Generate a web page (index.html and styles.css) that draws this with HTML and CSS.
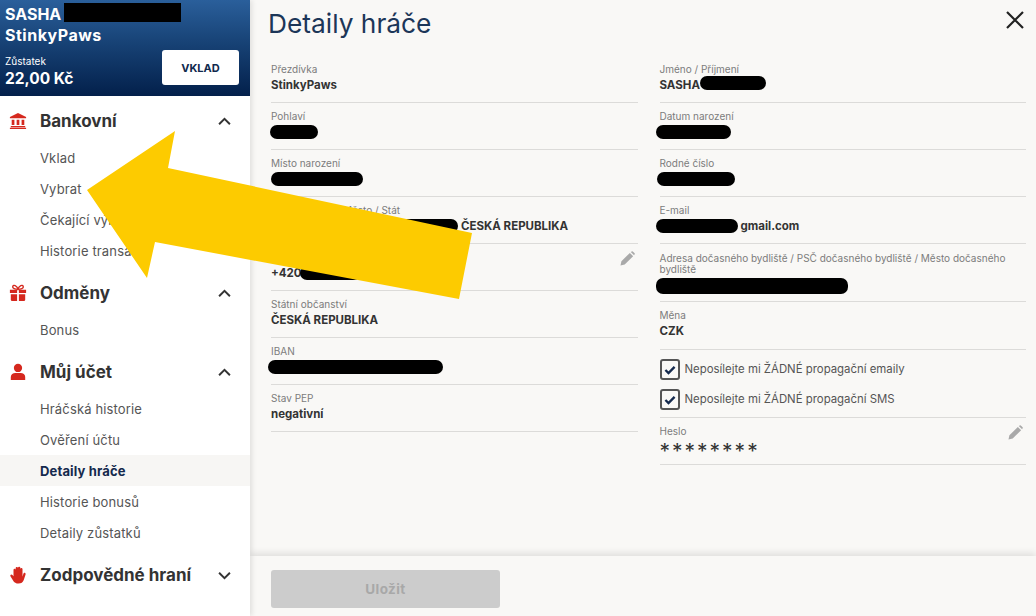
FILE: index.html
```html
<!DOCTYPE html>
<html lang="cs">
  <head>
    <meta charset="utf-8">
    <title>Detaily hráče</title>
    <link rel="stylesheet" href="styles.css">
  </head>
  <body>
    <aside class="sidebar">
      <div class="account">
        <div class="accountName">SASHA <span class="accountBlot"></span></div>
        <div class="accountNick">StinkyPaws</div>
        <div class="balanceRow">
          <div>
            <div class="balanceLabel">Zůstatek</div>
            <div class="balanceValue">22,00 Kč</div>
          </div>
          <button class="depositButton">VKLAD</button>
        </div>
      </div>
      <nav class="menu">
        <div class="menuHead">
          <svg class="menuIcon" viewBox="0 0 20 20"><path d="M10 1 L19 5.5 V7 H1 V5.5 Z M3 8.5 H6 V14.5 H3 Z M8.5 8.5 H11.5 V14.5 H8.5 Z M14 8.5 H17 V14.5 H14 Z M2 15.5 H18 V17 H2 Z M1 17.5 H19 V19 H1 Z"/></svg>
          <span class="menuTitle">Bankovní</span>
          <svg class="chevron" viewBox="0 0 12 8"><path d="M1 6.5 L6 1.5 L11 6.5"/></svg>
        </div>
        <ul class="subMenu">
          <li>Vklad</li>
          <li>Vybrat</li>
          <li>Čekající výběry</li>
          <li>Historie transakcí</li>
        </ul>
        <div class="menuHead">
          <svg class="menuIcon" viewBox="0 0 20 20"><path d="M1 6.5 H9 V10 H1 Z M11 6.5 H19 V10 H11 Z M2 11.5 H9 V19 H3.5 Q2 19 2 17.5 Z M11 11.5 H18 V17.5 Q18 19 16.5 19 H11 Z"/><path d="M10 6 C7 6 3.5 5 4.2 2.5 C5 0.5 8.5 1.5 10 5.5 C11.5 1.5 15 0.5 15.8 2.5 C16.5 5 13 6 10 6 Z" fill="none" stroke="#d5281e" stroke-width="1.6"/></svg>
          <span class="menuTitle">Odměny</span>
          <svg class="chevron" viewBox="0 0 12 8"><path d="M1 6.5 L6 1.5 L11 6.5"/></svg>
        </div>
        <ul class="subMenu">
          <li>Bonus</li>
        </ul>
        <div class="menuHead">
          <svg class="menuIcon" viewBox="0 0 20 20"><circle cx="10" cy="5.5" r="4.6"/><path d="M2 19 V15.5 C2 12.5 4.5 11 7 11 H13 C15.5 11 18 12.5 18 15.5 V19 Z"/></svg>
          <span class="menuTitle">Můj účet</span>
          <svg class="chevron" viewBox="0 0 12 8"><path d="M1 6.5 L6 1.5 L11 6.5"/></svg>
        </div>
        <ul class="subMenu">
          <li>Hráčská historie</li>
          <li>Ověření účtu</li>
          <li class="active">Detaily hráče</li>
          <li>Historie bonusů</li>
          <li>Detaily zůstatků</li>
        </ul>
        <div class="menuHead">
          <svg class="menuIcon" viewBox="0 0 20 20"><path d="M5 10 V4.5 Q5 3 6.2 3 Q7.4 3 7.4 4.5 V2.5 Q7.4 1 8.7 1 Q10 1 10 2.5 V2.2 Q10 .8 11.3 .8 Q12.6 .8 12.6 2.2 V3.5 Q12.6 2.2 13.8 2.2 Q15 2.2 15 3.5 V12 L16 8.5 Q16.6 7.2 17.7 7.6 Q18.8 8.2 18.4 9.5 L16.4 15.5 Q15 19.5 10.5 19.5 Q6.5 19.5 4.5 16 L1.6 11.5 Q1 10.2 2 9.6 Q3 9 3.8 10 L5 11.5 Z"/></svg>
          <span class="menuTitle">Zodpovědné hraní</span>
          <svg class="chevron" viewBox="0 0 12 8"><path d="M1 1.5 L6 6.5 L11 1.5"/></svg>
        </div>
      </nav>
    </aside>

    <main class="content">
      <header class="titleBar">
        <h1 class="title">Detaily hráče</h1>
        <svg class="closeIcon" viewBox="0 0 20 20"><path d="M2 2 L18 18 M18 2 L2 18"/></svg>
      </header>

      <div class="details">
        <div class="column">
          <div class="field">
            <div class="label">Přezdívka</div>
            <div class="value">StinkyPaws</div>
          </div>
          <div class="field">
            <div class="label">Pohlaví</div>
            <div class="value"><span class="blot blotGender"></span></div>
          </div>
          <div class="field">
            <div class="label">Místo narození</div>
            <div class="value"><span class="blot blotBirthPlace"></span></div>
          </div>
          <div class="field">
            <div class="label">Adresa / PSČ / Město / Stát</div>
            <div class="value"><span class="blot blotAddress"></span>ČESKÁ REPUBLIKA</div>
          </div>
          <div class="field">
            <div class="label">Telefonní číslo</div>
            <div class="value">+420<span class="blot blotPhone"></span></div>
            <svg class="pencil" viewBox="0 0 16 16"><path d="M0.5 15.5 L1.5 11 L10.5 2 L14 5.5 L5 14.5 Z M11.5 1 L12.5 0.4 Q13 0 13.6 0.4 L15.6 2.4 Q16 3 15.6 3.5 L15 4.5 Z"/></svg>
          </div>
          <div class="field">
            <div class="label">Státní občanství</div>
            <div class="value">ČESKÁ REPUBLIKA</div>
          </div>
          <div class="field">
            <div class="label">IBAN</div>
            <div class="value"><span class="blot blotIban"></span></div>
          </div>
          <div class="field">
            <div class="label">Stav PEP</div>
            <div class="value">negativní</div>
          </div>
        </div>

        <div class="column">
          <div class="field">
            <div class="label">Jméno / Příjmení</div>
            <div class="value">SASHA<span class="blot blotName"></span></div>
          </div>
          <div class="field">
            <div class="label">Datum narození</div>
            <div class="value"><span class="blot blotBirthDate"></span></div>
          </div>
          <div class="field">
            <div class="label">Rodné číslo</div>
            <div class="value"><span class="blot blotBirthNumber"></span></div>
          </div>
          <div class="field">
            <div class="label">E-mail</div>
            <div class="value"><span class="blot blotEmail"></span>gmail.com</div>
          </div>
          <div class="field fieldTall">
            <div class="label">Adresa dočasného bydliště / PSČ dočasného bydliště / Město dočasného bydliště</div>
            <div class="value"><span class="blot blotTempAddress"></span></div>
          </div>
          <div class="field fieldCurrency">
            <div class="label">Měna</div>
            <div class="value">CZK</div>
          </div>
          <div class="checks">
            <label class="check">
              <span class="checkBox"><svg viewBox="0 0 14 12"><path d="M1.5 6 L5.2 9.7 L12.5 2.2"/></svg></span>
              <span class="checkText">Neposílejte mi ŽÁDNÉ propagační emaily</span>
            </label>
            <label class="check">
              <span class="checkBox"><svg viewBox="0 0 14 12"><path d="M1.5 6 L5.2 9.7 L12.5 2.2"/></svg></span>
              <span class="checkText">Neposílejte mi ŽÁDNÉ propagační SMS</span>
            </label>
          </div>
          <div class="field">
            <div class="label">Heslo</div>
            <div class="value stars">********</div>
            <svg class="pencil" viewBox="0 0 16 16"><path d="M0.5 15.5 L1.5 11 L10.5 2 L14 5.5 L5 14.5 Z M11.5 1 L12.5 0.4 Q13 0 13.6 0.4 L15.6 2.4 Q16 3 15.6 3.5 L15 4.5 Z"/></svg>
          </div>
        </div>
      </div>

      <footer class="saveBar">
        <button class="saveButton" disabled>Uložit</button>
      </footer>
    </main>

    <!-- yellow arrow painted over the screenshot -->
    <svg class="arrow" viewBox="0 0 1036 616">
      <polygon points="87,190 175,131 168,168 472,233 459,299 155,242 147,278"/>
    </svg>
  </body>
</html>
```

FILE: styles.css
```css
* {
  box-sizing: border-box;
}

html, body {
  margin: 0;
  height: 100%;
}

body {
  display: flex;
  width: 1036px;
  height: 616px;
  overflow: hidden;
  position: relative;
  background-color: #f9f8f6;
  font-family: Inter, "Open Sans", sans-serif;
  color: #333333;
}

/* sidebar */

.sidebar {
  width: 250px;
  flex-shrink: 0;
  background-color: #ffffff;
  box-shadow: 2px 0 5px rgba(0, 0, 0, 0.1);
  z-index: 1;
}

.account {
  height: 96px;
  padding: 5px 11px 0 5px;
  color: #ffffff;
  background: linear-gradient(180deg, #2a5f9b 0%, #194579 40%, #03204b 100%);
}

.accountName,
.accountNick {
  font-size: 16px;
  font-weight: 700;
  line-height: 19px;
  display: flex;
  gap: 3px;
}

.accountNick {
  margin-top: 2px;
  letter-spacing: 0.5px;
}

.accountBlot {
  width: 117px;
  height: 19px;
  margin-top: -2px;
  background-color: #000000;
}

.balanceRow {
  display: flex;
  justify-content: space-between;
  align-items: flex-start;
  margin-top: 5px;
}

.balanceLabel {
  font-size: 10px;
  line-height: 14px;
  margin-top: 4px;
}

.balanceValue {
  font-size: 15.5px;
  font-weight: 700;
  line-height: 20px;
  margin-top: 1px;
}

.depositButton {
  width: 77px;
  height: 35px;
  border: 0;
  border-radius: 3px;
  background-color: #ffffff;
  color: #10294d;
  font-family: inherit;
  font-size: 11px;
  font-weight: 700;
}

.menu {
  padding-top: 4px;
}

.menuHead {
  display: flex;
  align-items: center;
  height: 42px;
  padding: 0 19px 0 9px;
}

.menuIcon {
  width: 18px;
  height: 18px;
  fill: #d5281e;
  margin-right: 13px;
}

.menuTitle {
  flex: 1;
  font-size: 17px;
  font-weight: 700;
  color: #333333;
}

.chevron {
  width: 13px;
  height: 9px;
  fill: none;
  stroke: #333333;
  stroke-width: 1.8;
}

.subMenu {
  list-style: none;
  margin: 0 0 6px 0;
  padding: 0;
}

.subMenu li {
  height: 31px;
  line-height: 33px;
  padding-left: 40px;
  font-size: 13px;
  letter-spacing: 0.15px;
  color: #555555;
}

.subMenu li.active {
  background-color: #f7f6f4;
  color: #14294d;
  font-weight: 700;
}

/* main part */

.content {
  flex: 1;
  display: flex;
  flex-direction: column;
  min-width: 0;
}

.titleBar {
  display: flex;
  justify-content: space-between;
  height: 56px;
  padding: 8px 11px 0 18px;
}

.title {
  margin: 0;
  font-size: 26.3px;
  font-weight: 400;
  line-height: 32px;
  color: #1c3658;
}

.closeIcon {
  width: 20px;
  height: 20px;
  margin-top: 2px;
  fill: none;
  stroke: #222222;
  stroke-width: 2.2;
}

.details {
  flex: 1;
  display: grid;
  grid-template-columns: 1fr 1fr;
  gap: 22px;
  padding: 0 10px 0 21px;
}

.field {
  position: relative;
  height: 47px;
  padding-top: 8px;
  border-bottom: 1px solid #dcdbd9;
}

.fieldTall {
  height: 58px;
  padding-top: 9px;
}

.fieldTall .value {
  margin-top: 3px;
}

.fieldCurrency {
  height: 48px;
}

.label {
  font-size: 10px;
  line-height: 11px;
  min-height: 14px;
  color: #7c7c7c;
}

.value {
  display: flex;
  align-items: center;
  height: 16px;
  margin-top: -1px;
  font-size: 11.5px;
  font-weight: 700;
  color: #333333;
}

.stars {
  font-size: 21px;
  font-weight: 400;
  letter-spacing: 2px;
  margin-top: 3px;
}

.pencil {
  position: absolute;
  top: 7px;
  right: 3px;
  width: 15px;
  height: 15px;
  fill: #a9a9a9;
}

/* redactions */

.blot {
  display: block;
  flex-shrink: 0;
  height: 14px;
  border-radius: 7px;
  background-color: #000000;
}

.blotGender {
  width: 48px;
  margin-left: -1px;
}

.blotBirthPlace {
  width: 92px;
}

.blotAddress {
  width: 187px;
  margin-right: 3px;
}

.blotPhone {
  width: 61px;
  margin-left: -2px;
}

.blotIban {
  width: 175px;
  margin-left: -3px;
}

.blotName {
  width: 66px;
  margin-top: -4px;
}

.blotBirthDate {
  width: 75px;
  margin-left: -4px;
}

.blotBirthNumber {
  width: 78px;
  margin-left: -3px;
}

.blotEmail {
  width: 82px;
  margin: 0 3px 0 -4px;
}

.blotTempAddress {
  width: 192px;
  height: 16px;
  margin-left: -4px;
}

/* checkboxes */

.checks {
  height: 68px;
  padding-top: 9px;
  border-bottom: 1px solid #dcdbd9;
  display: flex;
  flex-direction: column;
  gap: 9px;
}

.check {
  display: flex;
  align-items: center;
  gap: 5px;
  font-size: 11.4px;
  color: #555555;
}

.checkText {
  margin-top: -2px;
}

.checkBox {
  display: flex;
  align-items: center;
  justify-content: center;
  width: 20px;
  height: 21px;
  border: 2px solid #555555;
  border-radius: 3px;
}

.checkBox svg {
  width: 12px;
  height: 10px;
  fill: none;
  stroke: #14294d;
  stroke-width: 2.8;
}

/* footer */

.saveBar {
  height: 60px;
  padding: 14px 0 0 21px;
  background-color: #f9f8f6;
  box-shadow: 0 -3px 7px rgba(0, 0, 0, 0.1);
}

.saveButton {
  width: 229px;
  height: 38px;
  border: 0;
  border-radius: 3px;
  background-color: #cccccc;
  color: #a8a8a8;
  font-family: inherit;
  font-size: 13.5px;
  font-weight: 700;
  letter-spacing: 0.4px;
}

/* arrow */

.arrow {
  position: absolute;
  top: 0;
  left: 0;
  width: 1036px;
  height: 616px;
  z-index: 2;
  pointer-events: none;
}

.arrow polygon {
  fill: #fdcb00;
}
```
